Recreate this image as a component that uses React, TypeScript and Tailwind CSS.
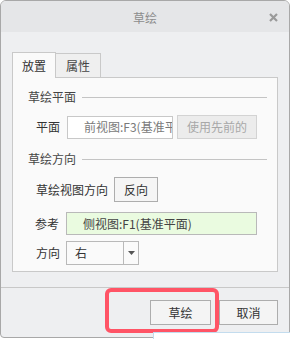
import React from 'react';

const font = { fontFamily: '"Noto Sans CJK SC", "Noto Sans", sans-serif' };

function SectionHeader({ title }: { title: string }) {
  return (
    <div className="flex items-center h-[14px] pl-[15px] pr-[10px]">
      <span className="text-[12px] leading-[14px] text-[#444]">{title}</span>
      <div className="flex-1 ml-[6px] h-px bg-[#c4c4c4]" />
    </div>
  );
}

export default function App() {
  return (
    <div className="relative w-[290px] h-[339px] bg-white text-[12px] text-[#333]" style={font}>
      {/* dialog window */}
      <div className="w-[290px] h-[338px] border border-[#a8a8a8] rounded-t-[6px] rounded-bl-[4px] bg-[#eeeff1] flex flex-col overflow-hidden">
        {/* title bar */}
        <div className="relative h-[31px] bg-[#e5e6e8] flex items-center justify-center shrink-0">
          <span className="text-[12px] leading-[14px] text-[#8c8c8c] mt-[2px]">草绘</span>
          <svg className="absolute right-[11px] top-[12px]" width="9" height="9" viewBox="0 0 9 9">
            <path d="M1 1 L8 8 M8 1 L1 8" stroke="#9a9a9a" strokeWidth="2.2" />
          </svg>
        </div>

        {/* body */}
        <div className="pl-[11px] pr-[11px] pt-[20px]">
          {/* tabs */}
          <div className="flex items-end h-[25px]">
            <div className="relative z-10 w-[44px] h-[26px] -mb-px bg-[#fafafa] border border-[#c9c9c9] border-b-0 flex items-center justify-center">
              <span className="leading-[14px] text-[#333]">放置</span>
            </div>
            <div className="w-[45px] h-[24px] bg-[#efefef] border border-[#c9c9c9] border-l-0 border-b-0 flex items-center justify-center">
              <span className="leading-[14px] text-[#444]">属性</span>
            </div>
          </div>

          {/* panel */}
          <div className="h-[195px] border border-[#c9c9c9] bg-[#fafafa] pt-[12px]">
            <SectionHeader title="草绘平面" />
            <div className="flex items-center h-[24px] mt-[11px] pl-[23px]">
              <span className="w-[24px] leading-[14px]">平面</span>
              <div className="ml-[7px] w-[106px] h-[23px] border border-[#c8c8c8] bg-white overflow-hidden whitespace-nowrap pl-[16px] flex items-center">
                <span className="leading-[14px] text-[#7a7a7a]">前视图:F3(基准平面)</span>
              </div>
              <div className="ml-[4px] w-[80px] h-[24px] border border-[#d3d3d3] bg-[#ececec] flex items-center justify-center">
                <span className="leading-[14px] text-[#a8a8a8]">使用先前的</span>
              </div>
            </div>

            <div className="mt-[13px]">
              <SectionHeader title="草绘方向" />
            </div>
            <div className="flex items-center h-[25px] mt-[11px] pl-[23px]">
              <span className="leading-[14px]">草绘视图方向</span>
              <div className="ml-[6px] w-[44px] h-[25px] border border-[#adadad] bg-[#f5f5f5] flex items-center justify-center">
                <span className="leading-[14px]">反向</span>
              </div>
            </div>

            <div className="flex items-center h-[23px] mt-[10px] pl-[22px]">
              <span className="w-[26px] leading-[14px]">参考</span>
              <div className="ml-[5px] w-[191px] h-[23px] border border-[#b9b9b9] bg-[#eafbe0] pl-[16px] flex items-center whitespace-nowrap overflow-hidden">
                <span className="leading-[14px] text-[#444]">侧视图:F1(基准平面)</span>
              </div>
            </div>

            <div className="flex items-center h-[24px] mt-[6px] pl-[23px]">
              <span className="w-[25px] leading-[14px]">方向</span>
              <div className="ml-[5px] w-[73px] h-[24px] border border-[#b9b9b9] bg-[#fafafa] flex">
                <div className="flex-1 flex items-center pl-[8px]">
                  <span className="leading-[14px]">右</span>
                </div>
                <div className="w-[15px] border-l border-[#b9b9b9] flex items-center justify-center">
                  <svg width="7" height="4" viewBox="0 0 7 4">
                    <path d="M0 0 L7 0 L3.5 4 Z" fill="#555" />
                  </svg>
                </div>
              </div>
            </div>
          </div>
        </div>

        {/* separator */}
        <div className="mt-[15px] h-px bg-[#c8c8c8]" />

        {/* buttons */}
        <div className="flex justify-end gap-[8px] pr-[11px] mt-[12px]">
          <div className="w-[61px] h-[25px] border border-[#adadad] bg-[#f4f4f4] flex items-center justify-center">
            <span className="leading-[14px]">草绘</span>
          </div>
          <div className="w-[59px] h-[25px] border border-[#adadad] bg-[#f4f4f4] flex items-center justify-center">
            <span className="leading-[14px]">取消</span>
          </div>
        </div>
      </div>

      {/* red highlight */}
      <div className="absolute left-[105px] top-[288px] w-[114px] h-[45px] border-[4px] border-[#ff5466] rounded-[6px]" />

      {/* underlying window edge */}
      <div className="absolute left-[153px] top-[332px] w-[137px] h-[7px] bg-white border-t border-l border-[#c3dcee]" />
    </div>
  );
}
